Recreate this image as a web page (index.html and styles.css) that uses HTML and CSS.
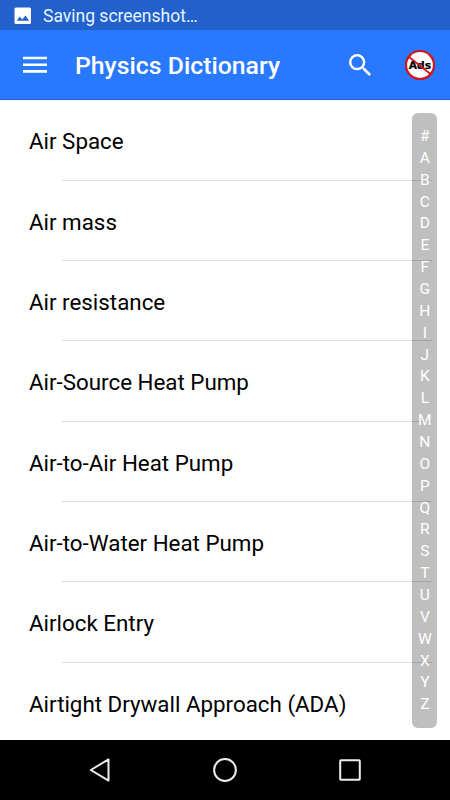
FILE: index.html
```
<!DOCTYPE html>
<html lang="en">
<head>
    <meta charset="UTF-8">
    <meta name="viewport" content="width=device-width, initial-scale=1.0">
    <title>Physics Dictionary</title>
    <link rel="stylesheet" href="styles.css">
</head>
<body>
    <div class="screen">
        <div class="status-bar">
            <svg class="status-icon" viewBox="0 0 18 18">
                <path fill="#fff" fill-rule="evenodd" d="M2 0.5h13.5a1.5 1.5 0 0 1 1.5 1.5v13.5a1.5 1.5 0 0 1-1.5 1.5H2a1.5 1.5 0 0 1-1.5-1.5V2A1.5 1.5 0 0 1 2 0.5zM5.8 9.6L2.8 13.8h12.4L11.4 8.4 8.2 12.6z"/>
            </svg>
            <span>Saving screenshot…</span>
        </div>

        <header class="toolbar">
            <svg class="menu-icon" viewBox="0 0 24 18">
                <path fill="#fff" d="M0 0.7h24v2.6H0zM0 7.4h24v2.6H0zM0 14.1h24v2.6H0z"/>
            </svg>
            <h1>Physics Dictionary</h1>
            <svg class="search-icon" viewBox="3 3 17.5 17.5">
                <path fill="#fff" d="M15.5 14h-.79l-.28-.27A6.471 6.471 0 0 0 16 9.5 6.5 6.5 0 1 0 9.5 16c1.61 0 3.09-.59 4.23-1.57l.27.28v.79l5 4.99L20.49 19l-4.99-5zm-6 0C7.01 14 5 11.99 5 9.5S7.01 5 9.5 5 14 7.01 14 9.5 11.99 14 9.5 14z"/>
            </svg>
            <svg class="ads-icon" viewBox="0 0 32 32">
                <circle cx="16" cy="16" r="14" fill="#fff" stroke="#d0141e" stroke-width="2.2"/>
                <text class="ads-text" x="16" y="20" text-anchor="middle" textLength="22.5" lengthAdjust="spacingAndGlyphs">Ads</text>
                <path d="M5 8L26.5 25" stroke="#d0141e" stroke-width="1.8"/>
            </svg>
        </header>

        <main class="content">
            <ul class="word-list">
                <li>Air Space</li>
                <li>Air mass</li>
                <li>Air resistance</li>
                <li>Air-Source Heat Pump</li>
                <li>Air-to-Air Heat Pump</li>
                <li>Air-to-Water Heat Pump</li>
                <li>Airlock Entry</li>
                <li>Airtight Drywall Approach (ADA)</li>
            </ul>

            <!-- fast scroll index, floats over the list -->
            <div class="index-bar">
                <span>#</span>
                <span>A</span>
                <span>B</span>
                <span>C</span>
                <span>D</span>
                <span>E</span>
                <span>F</span>
                <span>G</span>
                <span>H</span>
                <span>I</span>
                <span>J</span>
                <span>K</span>
                <span>L</span>
                <span>M</span>
                <span>N</span>
                <span>O</span>
                <span>P</span>
                <span>Q</span>
                <span>R</span>
                <span>S</span>
                <span>T</span>
                <span>U</span>
                <span>V</span>
                <span>W</span>
                <span>X</span>
                <span>Y</span>
                <span>Z</span>
            </div>
        </main>

        <nav class="nav-bar">
            <svg viewBox="0 0 26 26">
                <path d="M3.8 13L21.5 2.4v21.2z"/>
            </svg>
            <svg viewBox="0 0 26 26">
                <circle cx="13" cy="13" r="10.9"/>
            </svg>
            <svg viewBox="0 0 26 26">
                <rect x="3.2" y="3.2" width="19.6" height="19.6" rx="0.8"/>
            </svg>
        </nav>
    </div>
</body>
</html>
```
FILE: styles.css
```
* {
    box-sizing: border-box;
}
body {
    margin: 0;
    font-family: Roboto, sans-serif;
    background: #fff;
}
.screen {
    display: flex;
    flex-direction: column;
    width: 450px;
    height: 800px;
    overflow: hidden;
}
.status-bar {
    display: flex;
    align-items: center;
    height: 30px;
    padding: 0 14px;
    background: #2261cc;
    color: #e6f4ff;
    font-size: 17.5px;
    line-height: 30px;
}
.status-bar span {
    padding-top: 2px;
    margin-left: 11px;
}
.status-icon {
    width: 18px;
    height: 18px;
    margin-top: 1px;
}
.toolbar {
    display: flex;
    align-items: center;
    height: 70px;
    padding: 0 14px 0 23px;
    background: #2979ff;
    border-bottom: 1px solid #1e66dc;
}
.menu-icon {
    width: 24px;
    height: 18px;
}
.toolbar h1 {
    flex: 1;
    margin: 2px 0 0 28px;
    color: #fff;
    font-size: 24.8px;
    font-weight: 500;
}
.search-icon {
    width: 22px;
    height: 22px;
    margin-right: 33px;
}
.ads-icon {
    width: 32px;
    height: 32px;
}
.ads-text {
    font-family: "DejaVu Sans", sans-serif;
    font-size: 11px;
    font-weight: bold;
    fill: #000;
    stroke: #000;
    stroke-width: 0.2px;
}
.content {
    position: relative;
    flex: 1;
    overflow: hidden;
}
.word-list {
    margin: 0;
    padding: 0.4px 0 0;
    list-style: none;
}
.word-list li {
    height: 80.35px;
    padding: 0.8px 0 0 29px;
    color: #000;
    font-size: 22.35px;
    line-height: 81px;
    background: linear-gradient(#dedede, #dedede) no-repeat 62px 100% / 370px 1px;
}
.index-bar {
    position: absolute;
    top: 12.5px;
    right: 12.6px;
    display: flex;
    flex-direction: column;
    width: 25.2px;
    height: 615px;
    padding: 12.5px 0 12px;
    border-radius: 6px;
    background: rgba(0, 0, 0, 0.25);
    color: #fff;
    font-size: 15.5px;
    text-align: center;
}
.index-bar span {
    height: 21.87px;
    line-height: 22px;
}
.nav-bar {
    display: flex;
    justify-content: space-between;
    align-items: center;
    height: 60px;
    padding: 0 87px;
    background: #000;
}
.nav-bar svg {
    width: 26px;
    height: 26px;
    fill: none;
    stroke: #eee;
    stroke-width: 2;
    stroke-linejoin: round;
}
```
